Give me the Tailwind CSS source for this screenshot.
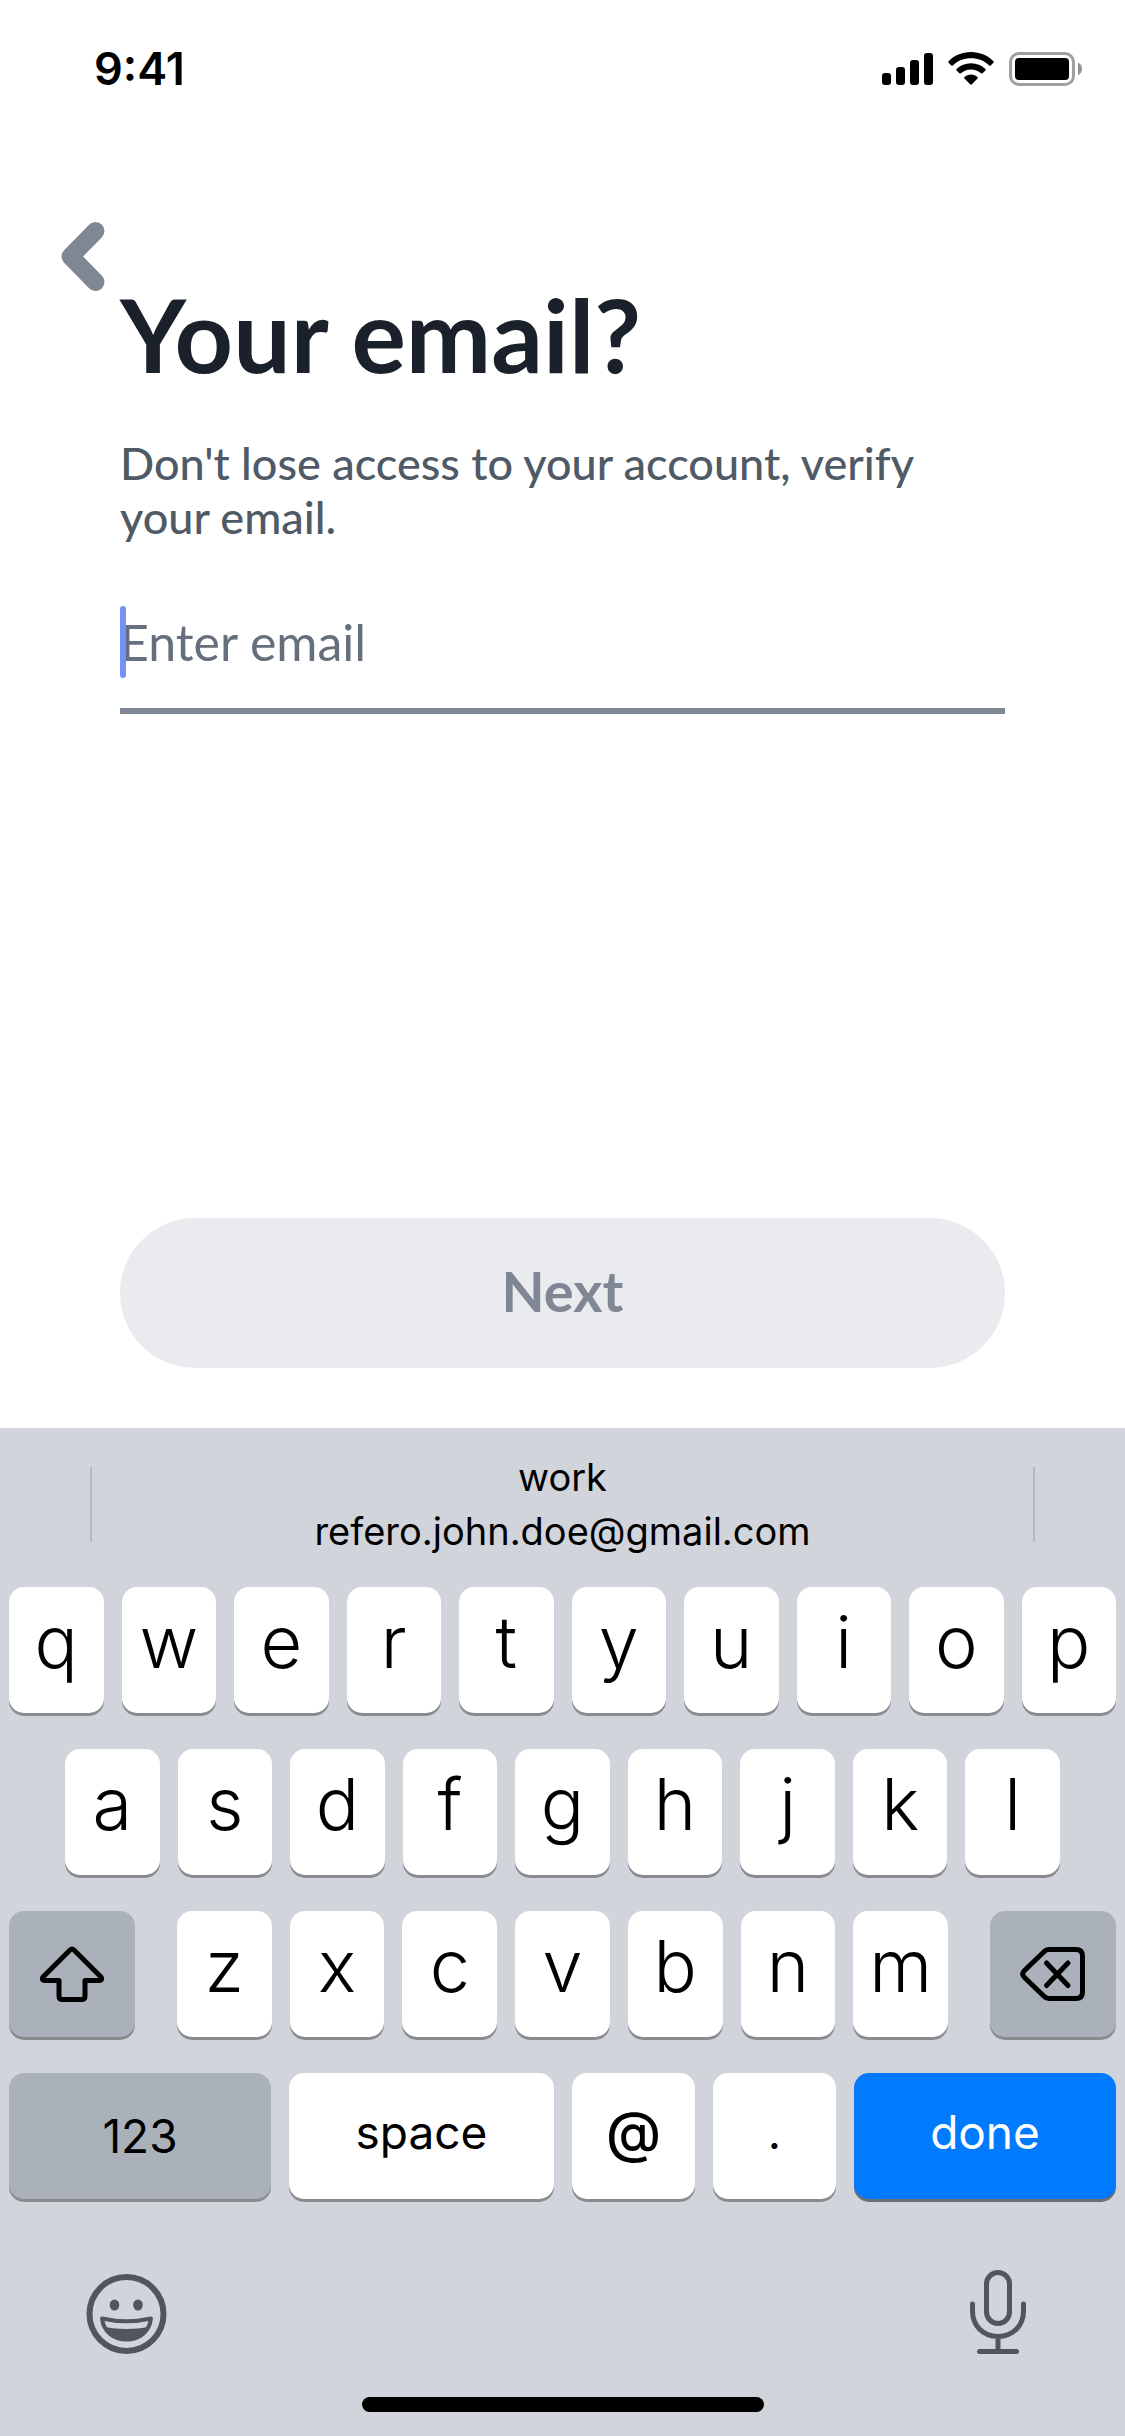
<!DOCTYPE html>
<html lang="en">
  <head>
    <meta charset="UTF-8" />
    <meta name="viewport" content="width=device-width, initial-scale=1.0" />
    <script src="https://cdn.jsdelivr.net/npm/@tailwindcss/browser@4"></script>
    <title>Your email?</title>
  </head>
  <body class="flex min-h-screen flex-col bg-white font-['Inter',sans-serif] text-black">
    <!-- Status bar -->
    <header class="flex items-center justify-between pt-10 pr-[43px] pl-[94px]">
      <div class="text-[45px] leading-[58px] font-semibold">9:41</div>
      <div class="flex items-center gap-[15px]">
        <svg class="h-[34px] w-[51px]" viewBox="0 0 51 34" aria-label="Signal">
          <rect x="0" y="21" width="9" height="12" rx="3" />
          <rect x="14" y="15" width="9" height="18" rx="3" />
          <rect x="28" y="8" width="9" height="25" rx="3" />
          <rect x="42" y="1" width="9" height="32" rx="3" />
        </svg>
        <svg class="h-[34px] w-[46px]" viewBox="0 0 46 34" aria-label="Wi-Fi">
          <path d="M23 0C14 0 6 3.500 .6 9.200q-.7.800 0 1.500l2.700 2.700q.8.800 1.600 0C9.700 8.800 16 6.300 23 6.300s13.300 2.500 18.100 7.100q.8.800 1.600 0l2.700-2.700q.7-.7 0-1.500C40 3.500 32 0 23 0Z" />
          <path d="M23 11.200c-5.600 0-10.700 2.200-14.400 5.700q-.8.800 0 1.600l2.800 2.700q.8.700 1.600 0c2.600-2.400 6.100-3.800 10-3.800s7.400 1.400 10 3.800q.8.700 1.600 0l2.800-2.700q.8-.8 0-1.600C33.700 13.400 28.600 11.200 23 11.200Z" />
          <path d="M23 22.500c-2.500 0-4.800.9-6.500 2.400q-.9.800 0 1.600l5.600 5.700q.9.900 1.800 0l5.600-5.700q.9-.8 0-1.600c-1.700-1.500-4-2.400-6.500-2.400Z" />
        </svg>
        <svg class="h-[34px] w-[73px]" viewBox="0 0 73 34" aria-label="Battery">
          <rect x="1.500" y="1.500" width="63" height="31" rx="8.500" fill="none" stroke="#a0a0a0" stroke-width="3" />
          <rect x="6" y="6" width="54" height="22" rx="4" />
          <path d="M69 10.500q4 2 4 6.300t-4 6.400Z" fill="#939393" />
        </svg>
      </div>
    </header>

    <nav class="flex pt-[124px] pl-[60px]">
      <button type="button" aria-label="Back">
        <svg class="h-[70px] w-[46px]" viewBox="0 0 46 70" fill="none" stroke="#7f8794" stroke-width="18" stroke-linecap="round" stroke-linejoin="round">
          <path d="M35.500 9 10.500 34.500l25 25.500" />
        </svg>
      </button>
    </nav>

    <!-- Email form -->
    <main class="flex grow flex-col px-[120px] pb-[60px] font-['Lato',sans-serif]">
      <h1 class="text-[102px] leading-[84px] font-bold text-[#1a212b]"><label for="email">Your email?</label></h1>
      <p class="pt-[60px] text-[45px] leading-[54px] font-medium text-[#4f5a66]">Don't lose access to your account, verify<br />your email.</p>
      <form class="flex grow flex-col justify-between pt-[54px]">
        <div class="relative">
          <input id="email" type="email" placeholder="Enter email" class="w-full border-b-6 border-[#7f8794] pt-2 pb-[30px] text-[50px] leading-[72px] text-[#4f5a66] outline-none placeholder:text-[#66707c]" />
          <span class="absolute top-2 left-0 h-[72px] w-[6px] rounded-full bg-[#7391f7]"></span>
        </div>
        <button type="submit" class="h-[150px] w-full rounded-full bg-[#eaebef] pb-1 text-[56px] font-bold text-[#7f8794]">Next</button>
      </form>
    </main>

    <!-- Keyboard -->
    <section class="bg-[#d1d4db]">
      <div class="flex items-center justify-between px-[90px] pt-[22px] pb-[29px]">
        <span class="h-[75px] w-[2px] bg-[#b4b8bf]"></span>
        <button type="button" class="text-center text-[38px] leading-[54px]">work<br />refero.john.doe@gmail.com</button>
        <span class="h-[75px] w-[2px] bg-[#b4b8bf]"></span>
      </div>

      <div class="grid grid-cols-10 gap-[18px] px-[9px] text-[72px] leading-[110px] font-light">
        <button type="button" class="h-[126px] rounded-[15px] bg-white pb-4 shadow-[0_3px_0_#898b8f]">q</button>
        <button type="button" class="h-[126px] rounded-[15px] bg-white pb-4 shadow-[0_3px_0_#898b8f]">w</button>
        <button type="button" class="h-[126px] rounded-[15px] bg-white pb-4 shadow-[0_3px_0_#898b8f]">e</button>
        <button type="button" class="h-[126px] rounded-[15px] bg-white pb-4 shadow-[0_3px_0_#898b8f]">r</button>
        <button type="button" class="h-[126px] rounded-[15px] bg-white pb-4 shadow-[0_3px_0_#898b8f]">t</button>
        <button type="button" class="h-[126px] rounded-[15px] bg-white pb-4 shadow-[0_3px_0_#898b8f]">y</button>
        <button type="button" class="h-[126px] rounded-[15px] bg-white pb-4 shadow-[0_3px_0_#898b8f]">u</button>
        <button type="button" class="h-[126px] rounded-[15px] bg-white pb-4 shadow-[0_3px_0_#898b8f]">i</button>
        <button type="button" class="h-[126px] rounded-[15px] bg-white pb-4 shadow-[0_3px_0_#898b8f]">o</button>
        <button type="button" class="h-[126px] rounded-[15px] bg-white pb-4 shadow-[0_3px_0_#898b8f]">p</button>
      </div>

      <div class="grid grid-cols-9 gap-[18px] px-[65px] pt-9 text-[72px] leading-[110px] font-light">
        <button type="button" class="h-[126px] rounded-[15px] bg-white pb-4 shadow-[0_3px_0_#898b8f]">a</button>
        <button type="button" class="h-[126px] rounded-[15px] bg-white pb-4 shadow-[0_3px_0_#898b8f]">s</button>
        <button type="button" class="h-[126px] rounded-[15px] bg-white pb-4 shadow-[0_3px_0_#898b8f]">d</button>
        <button type="button" class="h-[126px] rounded-[15px] bg-white pb-4 shadow-[0_3px_0_#898b8f]">f</button>
        <button type="button" class="h-[126px] rounded-[15px] bg-white pb-4 shadow-[0_3px_0_#898b8f]">g</button>
        <button type="button" class="h-[126px] rounded-[15px] bg-white pb-4 shadow-[0_3px_0_#898b8f]">h</button>
        <button type="button" class="h-[126px] rounded-[15px] bg-white pb-4 shadow-[0_3px_0_#898b8f]">j</button>
        <button type="button" class="h-[126px] rounded-[15px] bg-white pb-4 shadow-[0_3px_0_#898b8f]">k</button>
        <button type="button" class="h-[126px] rounded-[15px] bg-white pb-4 shadow-[0_3px_0_#898b8f]">l</button>
      </div>

      <div class="flex gap-[42px] px-[9px] pt-9">
        <button type="button" aria-label="Shift" class="flex h-[126px] w-[126px] items-center justify-center rounded-[15px] bg-[#abb1bb] shadow-[0_3px_0_#898b8f]">
          <svg class="h-[56px] w-[66px]" viewBox="0 0 66 56" fill="none" stroke="#000" stroke-width="5" stroke-linejoin="round">
            <path d="M30.800 4.200q2.200-2.200 4.400 0L62 31q1.800 3.500-1.500 3.500H46V50q0 3.500-3.500 3.500h-19Q20 53.500 20 50V34.500H5.500Q2.200 34.500 4 31Z" />
          </svg>
        </button>
        <div class="grid grow grid-cols-7 gap-[18px] text-[72px] leading-[110px] font-light">
          <button type="button" class="h-[126px] rounded-[15px] bg-white pb-4 shadow-[0_3px_0_#898b8f]">z</button>
          <button type="button" class="h-[126px] rounded-[15px] bg-white pb-4 shadow-[0_3px_0_#898b8f]">x</button>
          <button type="button" class="h-[126px] rounded-[15px] bg-white pb-4 shadow-[0_3px_0_#898b8f]">c</button>
          <button type="button" class="h-[126px] rounded-[15px] bg-white pb-4 shadow-[0_3px_0_#898b8f]">v</button>
          <button type="button" class="h-[126px] rounded-[15px] bg-white pb-4 shadow-[0_3px_0_#898b8f]">b</button>
          <button type="button" class="h-[126px] rounded-[15px] bg-white pb-4 shadow-[0_3px_0_#898b8f]">n</button>
          <button type="button" class="h-[126px] rounded-[15px] bg-white pb-4 shadow-[0_3px_0_#898b8f]">m</button>
        </div>
        <button type="button" aria-label="Delete" class="flex h-[126px] w-[126px] items-center justify-center rounded-[15px] bg-[#abb1bb] shadow-[0_3px_0_#898b8f]">
          <svg class="h-[56px] w-[66px]" viewBox="0 0 66 56" fill="none" stroke="#000" stroke-width="5" stroke-linecap="round" stroke-linejoin="round">
            <path d="M29 3.500h27q6.500 0 6.500 6.500v36q0 6.500-6.500 6.500H29q-3 0-5-2.200L4 31q-2.500-3 0-6L24 5.700q2-2.200 5-2.200Z" />
            <path d="M26.500 17 48 39.500M48 17 26.500 39.500" />
          </svg>
        </button>
      </div>

      <div class="flex gap-[18px] px-[9px] pt-9 text-[46px]">
        <button type="button" class="h-[126px] flex-[262] rounded-[15px] bg-[#abb1bb] shadow-[0_3px_0_#898b8f]">123</button>
        <button type="button" class="h-[126px] flex-[265] rounded-[15px] bg-white pb-2 shadow-[0_3px_0_#898b8f]">space</button>
        <button type="button" class="h-[126px] flex-[123] rounded-[15px] bg-white pb-2 text-[56px] font-medium shadow-[0_3px_0_#898b8f]">@</button>
        <button type="button" class="h-[126px] flex-[123] rounded-[15px] bg-white pb-2 shadow-[0_3px_0_#898b8f]">.</button>
        <button type="button" class="h-[126px] flex-[262] rounded-[15px] bg-[#007aff] pb-2 text-white shadow-[0_3px_0_#6b6f76]">done</button>
      </div>

      <div class="flex items-center justify-between px-[86px] pt-[71px]">
        <button type="button" aria-label="Emoji">
          <svg class="h-[84px] w-[81px]" viewBox="0 0 81 84" fill="none">
            <circle cx="40.500" cy="44" r="37" stroke="#50555e" stroke-width="6" />
            <ellipse cx="28.500" cy="35" rx="4.800" ry="5.600" fill="#50555e" />
            <ellipse cx="52" cy="35" rx="4.800" ry="5.600" fill="#50555e" />
            <path d="M16 48.500Q40.500 54 65 48.500C63.500 61.500 53.500 69.500 40.500 69.500S17.500 61.500 16 48.500Z" stroke="#50555e" stroke-width="4" stroke-linejoin="round" />
            <path d="M18 57Q40.500 61 63 57C59 65.500 51 70 40.500 70S22 65.500 18 57Z" fill="#50555e" />
          </svg>
        </button>
        <button type="button" aria-label="Dictate">
          <svg class="h-[84px] w-[84px]" viewBox="0 0 84 84" fill="none" stroke="#50555e" stroke-width="5" stroke-linecap="round">
            <rect x="31.500" y="2.500" width="23" height="51" rx="11.500" />
            <path d="M17.500 34v7c0 14 10 25.500 25.500 25.500S68.500 55 68.500 41v-7M43 67v15M24.500 81.500h37" />
          </svg>
        </button>
      </div>

      <div class="flex justify-center pt-[43px] pb-6">
        <span class="h-[15px] w-[402px] rounded-full bg-black"></span>
      </div>
    </section>
  </body>
</html>
